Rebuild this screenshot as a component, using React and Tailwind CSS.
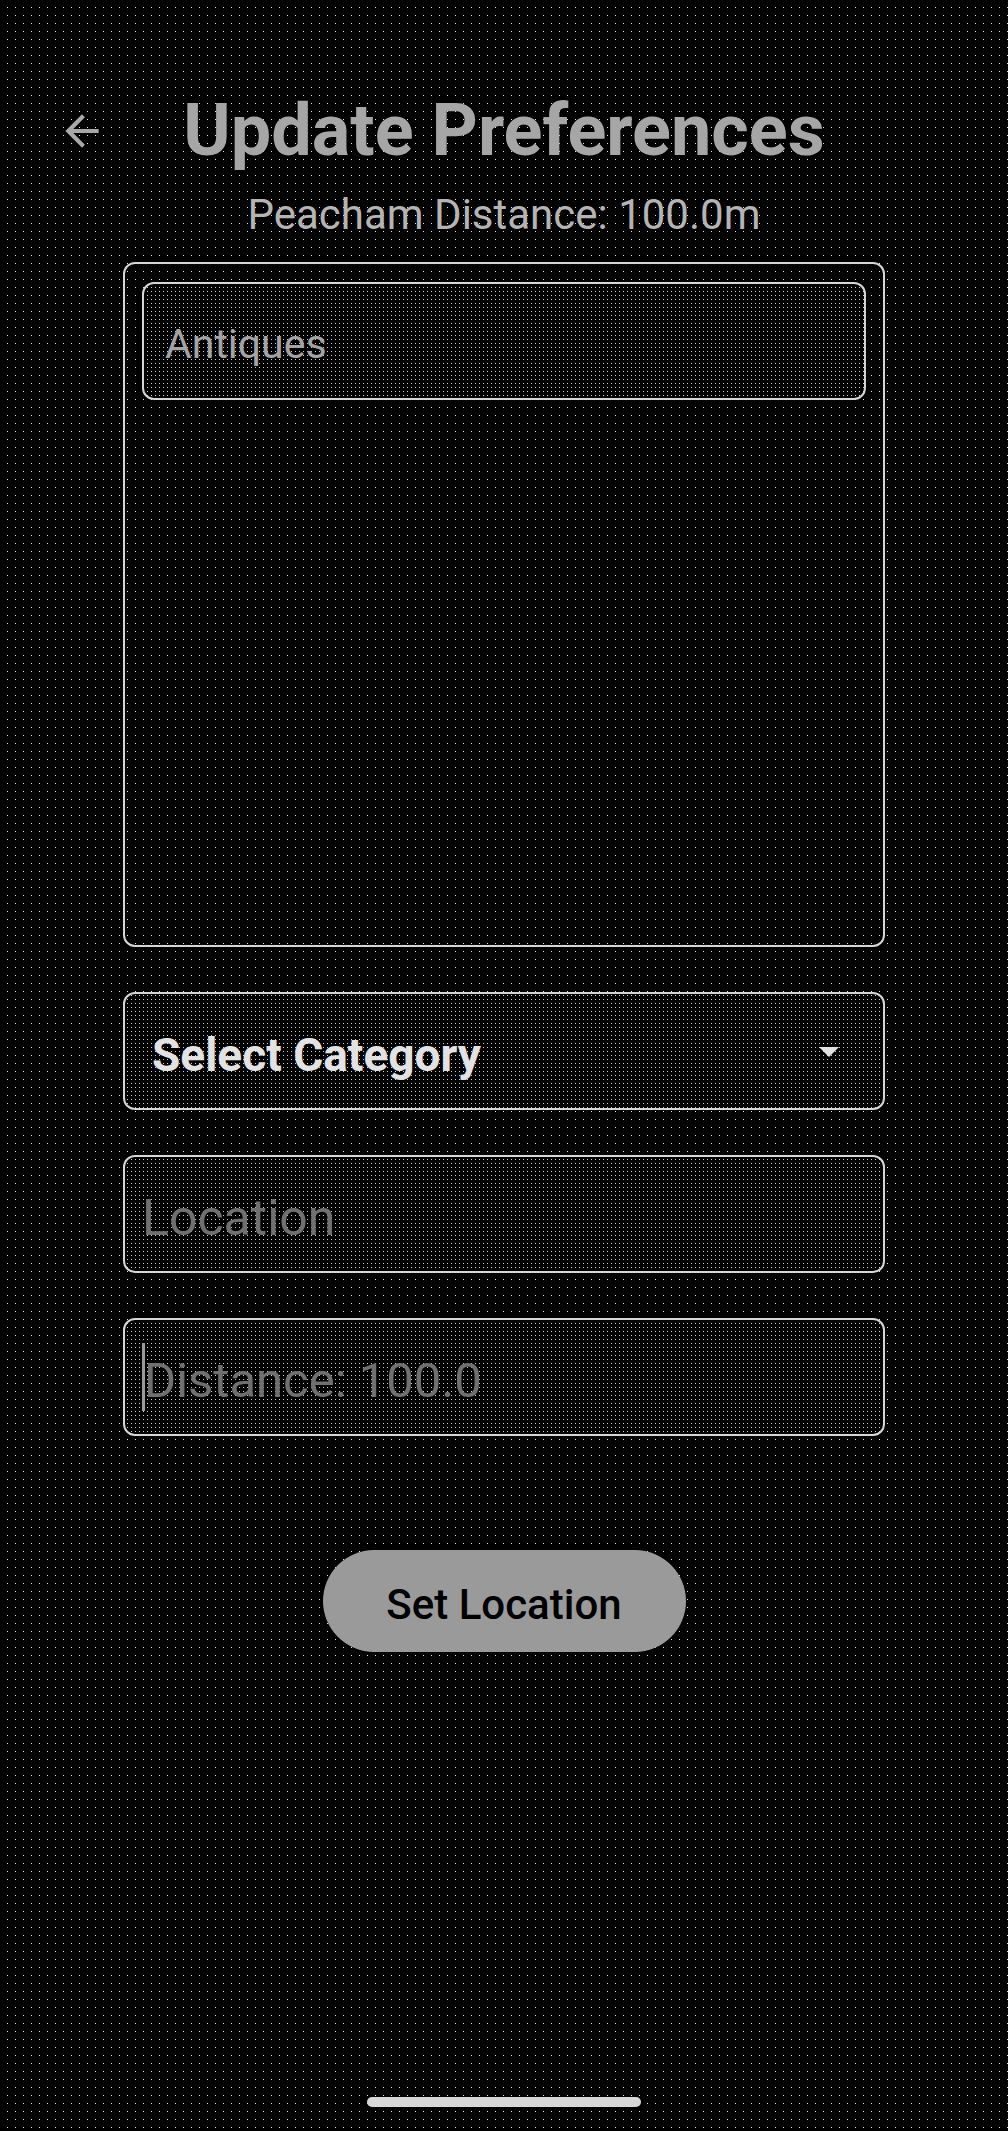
import React from 'react';

const dots =
  'bg-black bg-fixed bg-[linear-gradient(to_right,#000_7px,transparent_7px),linear-gradient(to_bottom,#000_7px,#e6e6e6_7px)] bg-size-[8px_8px]';
const fill =
  'bg-black bg-fixed bg-[linear-gradient(to_right,#000_3px,transparent_3px),linear-gradient(to_bottom,#000_3px,#d0d0d0_3px)] bg-size-[4px_4px]';

const Field = ({ children, className = '' }) => (
  <div className={`h-[118px] w-full flex items-center pt-[8px] rounded-[12px] border-2 border-[#d6d6d6] ${fill} ${className}`}>
    {children}
  </div>
);

const App = () => {
  return (
    <div className={`min-h-[2131px] w-full flex flex-col font-['Roboto',sans-serif] ${dots}`}>
      <div className="pt-[95px] grid grid-cols-[1fr_auto_1fr] items-center">
        <div>
          <svg viewBox="0 0 24 24" className="ml-[57px] w-[50px] h-[50px] fill-[#a8a8a8]">
            <path d="M20 11H7.83l5.59-5.59L12 4l-8 8 8 8 1.41-1.41L7.83 13H20v-2z" />
          </svg>
        </div>
        <h1 className="text-[72px] leading-[72px] font-bold text-[#a6a6a6]">Update Preferences</h1>
        <div />
      </div>

      <p className="mt-[27px] text-center text-[42px] leading-[42px] text-[#b4b4b4]">
        Peacham Distance: 100.0m
      </p>

      <div className="mt-[26px] mx-auto w-[762px] flex flex-col gap-[45px]">
        <div className="h-[685px] rounded-[12px] border-2 border-[#d6d6d6] pt-[18px] px-[17px]">
          <div className={`h-[118px] flex items-center pt-[8px] pl-[21px] rounded-[12px] border-2 border-[#d6d6d6] ${fill}`}>
            <span className="text-[41px] text-[#a4a4a4]">Antiques</span>
          </div>
        </div>

        <Field className="pl-[27px] pr-[30px] justify-between">
          <span className="text-[46px] font-bold text-[#e2e2e2]">Select Category</span>
          <svg viewBox="0 0 24 24" className="-mt-[8px] w-[48px] h-[48px] fill-[#e2e2e2]">
            <path d="M7 10l5 5 5-5z" />
          </svg>
        </Field>

        <Field className="pl-[17px]">
          <span className="text-[50px] text-[#707070]">Location</span>
        </Field>

        <Field className="pl-[17px]">
          <span className="-mt-[8px] w-[3px] h-[68px] bg-[#9a9a9a]" />
          <span className="-ml-[1px] text-[49px] text-[#707070]">Distance: 100.0</span>
        </Field>
      </div>

      <div className="mt-[114px] flex justify-center">
        <button className="w-[363px] h-[102px] pt-[6px] rounded-full bg-[#9a9a9a] text-black text-[42px] font-medium">
          Set Location
        </button>
      </div>

      <div className="mt-auto mb-[24px] mx-auto w-[274px] h-[10px] rounded-full bg-[#d8d8d8]" />
    </div>
  );
};

export default App;
